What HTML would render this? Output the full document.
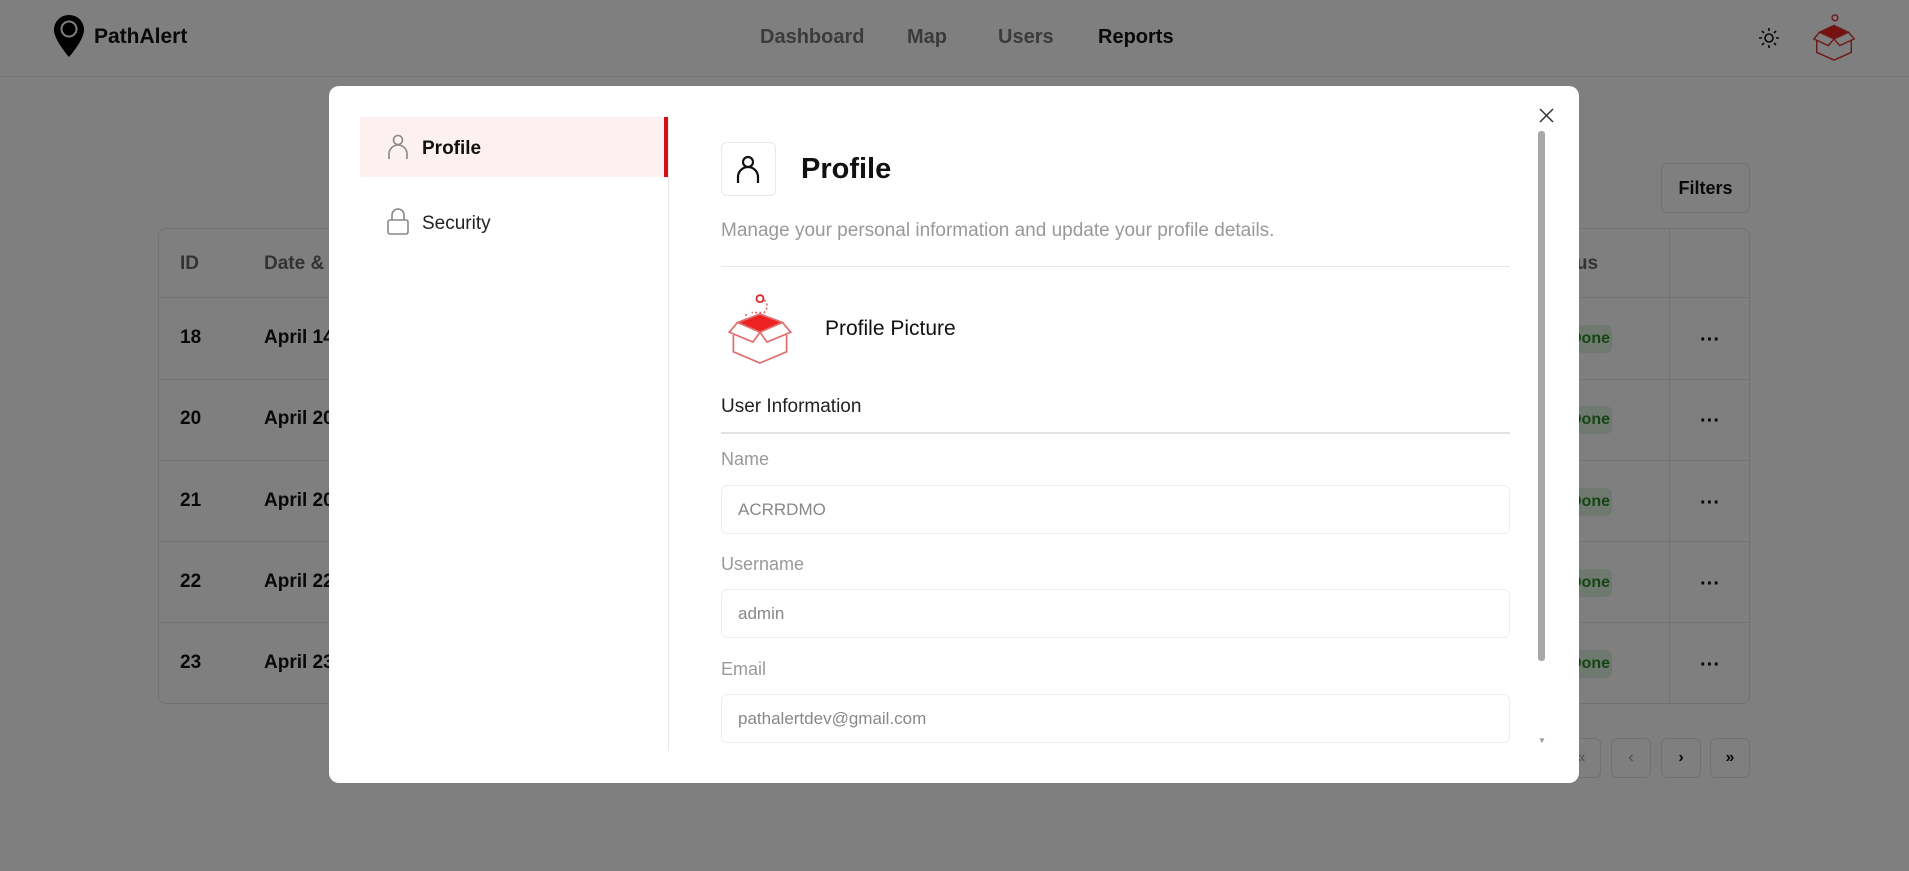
<!DOCTYPE html>
<html><head><meta charset="utf-8"><style>
*{box-sizing:border-box;margin:0;padding:0}
body{width:1909px;height:871px;overflow:hidden;background:#fff;font-family:"Liberation Sans",sans-serif;position:relative}
.a{position:absolute}
.hdr{left:0;top:0;width:1909px;height:77px;border-bottom:1px solid #eee}
.nav{top:26px;font-size:20px;font-weight:bold;color:#777}
.card{left:158px;top:228px;width:1592px;height:476px;border:1px solid #e2e2e2;border-radius:8px}
.th{top:253px;font-size:19px;color:#666;font-weight:bold}
.row{left:159px;width:1590px;height:1px;background:#e6e6e6}
.td{font-size:19px;font-weight:bold;color:#111}
.badge{left:1560px;width:52px;height:28px;background:#dff3df;border-radius:6px;color:#2a8a2a;font-size:16px;font-weight:bold;line-height:28px;padding-left:10px}
.dots{left:1700px;font-size:20px;font-weight:bold;color:#111}
.btn{border:1px solid #e2e2e2;border-radius:6px;text-align:center;color:#111}
.ov{left:0;top:0;width:1909px;height:871px;background:rgba(0,0,0,.5)}
.modal{left:329px;top:86px;width:1250px;height:697px;background:#fff;border-radius:10px;overflow:hidden}
.lbl{left:392px;font-size:18px;color:#999}
.inp{left:392px;width:789px;height:49px;border:1px solid #eee;border-radius:6px;font-size:17px;color:#888;padding-left:16px;line-height:47px}
</style></head><body>
<div class="a hdr"></div>
<svg class="a" style="left:52px;top:14px" width="34" height="44" viewBox="0 0 34 44"><path d="M17 1C8 1 2 8 2 16c0 10 15 27 15 27s15-17 15-27C32 8 26 1 17 1z" fill="#000"/><circle cx="17" cy="15" r="7.5" fill="none" stroke="#fff" stroke-width="2"/><circle cx="17" cy="15" r="5" fill="#000"/></svg>
<div class="a" style="left:94px;top:25px;font-size:21px;font-weight:bold;color:#111">PathAlert</div>
<div class="a nav" style="left:760px">Dashboard</div>
<div class="a nav" style="left:907px">Map</div>
<div class="a nav" style="left:998px">Users</div>
<div class="a nav" style="left:1098px;color:#111">Reports</div>
<svg class="a" style="left:1758px;top:27px" width="22" height="22" viewBox="0 0 22 22" stroke="#111" stroke-width="1.6" fill="none"><circle cx="11" cy="11" r="4"/><path d="M11 1v3M11 18v3M1 11h3M18 11h3M4 4l2 2M16 16l2 2M4 18l2-2M16 6l2-2"/></svg>
<svg class="a" style="left:1810px;top:10px" width="48" height="54" viewBox="0 0 100 100" fill="none" stroke="#d33" stroke-width="3"><circle cx="52" cy="10" r="6"/><path d="M20 40l30-14 30 14-30 14z" fill="#e22"/><path d="M20 40l-12 14 30 14 12-14M80 40l12 14-30 14-12-14M14 58v24l36 16 36-16V58"/></svg>
<div class="a btn" style="left:1661px;top:163px;width:89px;height:50px;line-height:48px;font-size:18px;font-weight:bold">Filters</div>
<div class="a card"></div>
<div class="a th" style="left:180px">ID</div><div class="a th" style="left:264px">Date &amp; Time</div><div class="a th" style="left:1540px">Status</div>
<div class="a" style="left:1669px;top:229px;width:1px;height:474px;background:#e6e6e6"></div>
<div class="a row" style="top:297px"></div><div class="a row" style="top:379px"></div><div class="a row" style="top:460px"></div><div class="a row" style="top:541px"></div><div class="a row" style="top:622px"></div>
<div class="a td" style="left:180px;top:327px">18</div><div class="a td" style="left:264px;top:327px">April 14</div><div class="a badge" style="top:325px">Done</div><div class="a dots" style="top:329px">···</div>
<div class="a td" style="left:180px;top:408px">20</div><div class="a td" style="left:264px;top:408px">April 20</div><div class="a badge" style="top:406px">Done</div><div class="a dots" style="top:410px">···</div>
<div class="a td" style="left:180px;top:490px">21</div><div class="a td" style="left:264px;top:490px">April 20</div><div class="a badge" style="top:488px">Done</div><div class="a dots" style="top:492px">···</div>
<div class="a td" style="left:180px;top:571px">22</div><div class="a td" style="left:264px;top:571px">April 22</div><div class="a badge" style="top:569px">Done</div><div class="a dots" style="top:573px">···</div>
<div class="a td" style="left:180px;top:652px">23</div><div class="a td" style="left:264px;top:652px">April 23</div><div class="a badge" style="top:650px">Done</div><div class="a dots" style="top:654px">···</div>
<div class="a btn" style="left:1561px;top:738px;width:40px;height:40px;line-height:38px;color:#999">«</div>
<div class="a btn" style="left:1611px;top:738px;width:40px;height:40px;line-height:38px;color:#999">‹</div>
<div class="a btn" style="left:1661px;top:738px;width:40px;height:40px;line-height:38px;font-weight:bold">›</div>
<div class="a btn" style="left:1710px;top:738px;width:40px;height:40px;line-height:38px;font-weight:bold">»</div>
<div class="a ov"></div>
<div class="a modal">
 <div class="a" style="left:31px;top:31px;width:308px;height:60px;background:#fdf0f0"></div>
 <div class="a" style="left:335px;top:31px;width:4px;height:60px;background:#d0101a"></div>
 <div class="a" style="left:339px;top:31px;width:1px;height:634px;background:#e8e8e8"></div>
 <svg class="a" style="left:58px;top:48px" width="22" height="26" viewBox="0 0 22 26" fill="none" stroke="#888" stroke-width="1.6"><circle cx="11" cy="6" r="4.5"/><path d="M2 25v-5a9 9 0 0 1 18 0v5"/></svg>
 <div class="a" style="left:93px;top:52px;font-size:19px;font-weight:bold;color:#111">Profile</div>
 <svg class="a" style="left:57px;top:121px" width="24" height="28" viewBox="0 0 24 28" fill="none" stroke="#888" stroke-width="1.6"><path d="M6 13V8a6 6 0 0 1 12 0v5"/><rect x="2" y="13" width="20" height="14" rx="2"/></svg>
 <div class="a" style="left:93px;top:127px;font-size:19px;color:#222">Security</div>
 <div class="a" style="left:392px;top:56px;width:55px;height:54px;border:1px solid #e8e8e8;border-radius:6px"></div>
 <svg class="a" style="left:406px;top:68px" width="26" height="30" viewBox="0 0 26 30" fill="none" stroke="#111" stroke-width="2.2"><circle cx="13" cy="8" r="5"/><path d="M3 29v-6a10 10 0 0 1 20 0v6"/></svg>
 <div class="a" style="left:472px;top:67px;font-size:29px;font-weight:bold;color:#111">Profile</div>
 <div class="a" style="left:392px;top:134px;font-size:19px;color:#999">Manage your personal information and update your profile details.</div>
 <div class="a" style="left:392px;top:180px;width:789px;height:1px;background:#e6e6e6"></div>
 <svg class="a" style="left:396px;top:204px" width="70" height="76" viewBox="0 0 100 100" fill="none" stroke="#e07070" stroke-width="2.5"><circle cx="50" cy="8" r="5" stroke="#d22"/><path d="M56 10q8 8 0 18h-18M30 30v10" stroke-dasharray="3 3"/><path d="M18 42l32-12 32 12-32 14z" fill="#ee2222" stroke="#e07070"/><path d="M18 42l-12 14 34 14 10-14M82 42l12 14-34 14-10-14M12 60v24l38 16 38-16V60"/></svg>
 <div class="a" style="left:496px;top:231px;font-size:21px;color:#111">Profile Picture</div>
 <div class="a" style="left:392px;top:310px;font-size:19px;color:#222">User Information</div>
 <div class="a" style="left:392px;top:346px;width:789px;height:2px;background:#e2e2e2"></div>
 <div class="a lbl" style="top:363px">Name</div>
 <div class="a inp" style="top:399px">ACRRDMO</div>
 <div class="a lbl" style="top:468px">Username</div>
 <div class="a inp" style="top:503px">admin</div>
 <div class="a lbl" style="top:573px">Email</div>
 <div class="a inp" style="top:608px">pathalertdev@gmail.com</div>
 <div class="a" style="left:1209px;top:45px;width:7px;height:530px;background:#a8a8a8;border-radius:3px"></div>
 <div class="a" style="left:1209px;top:650px;font-size:8px;color:#999">▼</div>
 <svg class="a" style="left:1210px;top:22px" width="15" height="15" viewBox="0 0 15 15" stroke="#333" stroke-width="1.5"><path d="M1 1l13 13M14 1L1 14"/></svg>
</div>
</body></html>
